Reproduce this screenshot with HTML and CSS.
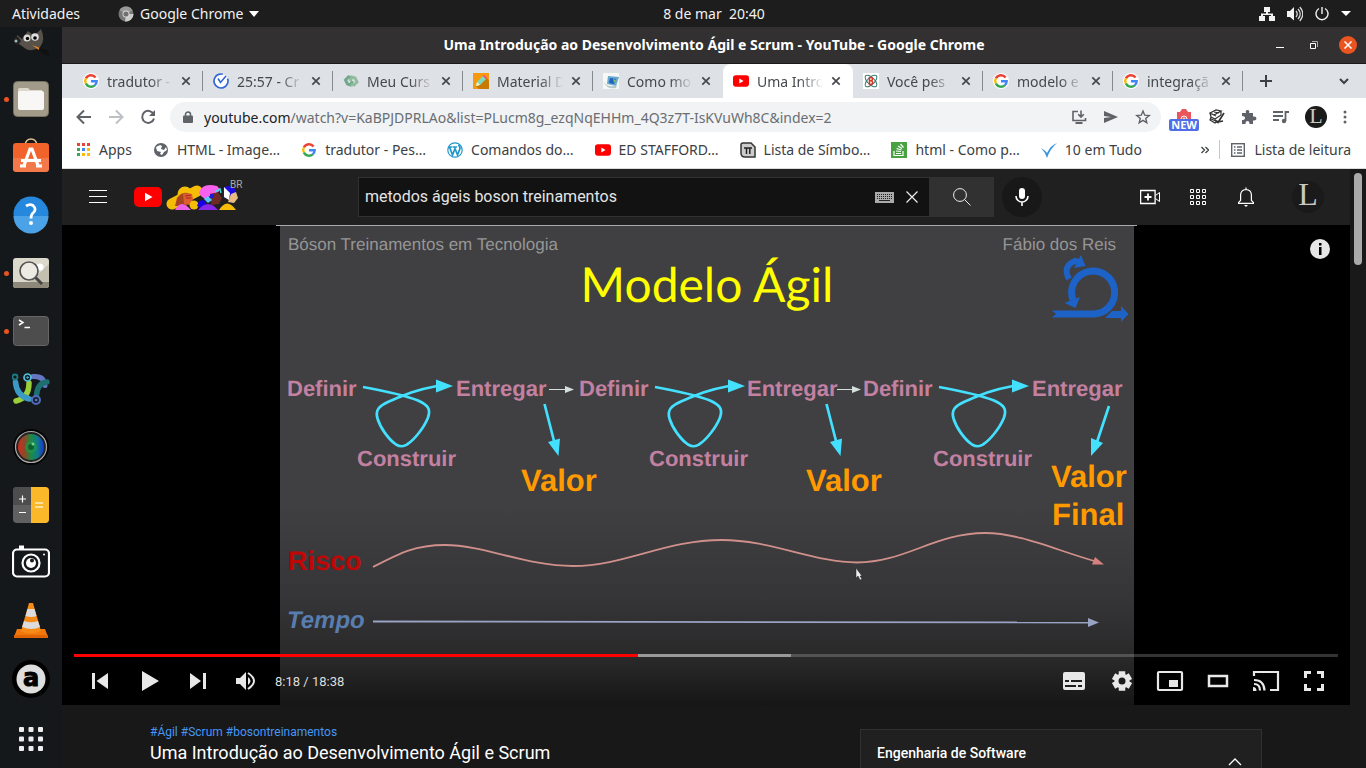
FILE: index.html
```html
<!DOCTYPE html>
<html lang="pt-BR">
<head>
<meta charset="utf-8">
<title>Uma Introdução ao Desenvolvimento Ágil e Scrum - YouTube</title>
<link rel="stylesheet" href="styles.css">
</head>
<body>
<svg class="defs" aria-hidden="true">
  <symbol id="google" viewBox="0 0 16 16">
    <g fill="none" stroke-width="2.4">
      <path d="M12.6 4.4A5.8 5.8 0 0 0 2.9 5.400" stroke="#ea4335"/>
      <path d="M2.900 5.300A5.800 5.800 0 0 0 2.900 10.700" stroke="#fbbc05"/>
      <path d="M2.900 10.600A5.800 5.800 0 0 0 11.800 12.300" stroke="#34a853"/>
      <path d="M8 8.200H13.700A5.800 5.800 0 0 1 11.700 12.400" stroke="#4285f4"/>
    </g>
  </symbol>
  <symbol id="close" viewBox="0 0 10 10"><path d="M1.300 1.300l7.400 7.400M8.700 1.300l-7.400 7.400" stroke="currentColor" stroke-width="1.700"/></symbol>
  <symbol id="youtube" viewBox="0 0 28 20"><rect width="28" height="20" rx="5" fill="#f00"/><path d="M11 5.700v8.600L18.500 10z" fill="#fff"/></symbol>
  <symbol id="loop" viewBox="0 0 94 72">
    <path d="M2 9C24 13 43 17 57 22.500C67 27 70 31 67 39.500C63 50 53 62 46 66.500Q41 70 35 66.500C27 61 19 49 16.500 40.500C14 32 18 28 28 23.500C42 17.500 54 12 76 8" fill="none" stroke="#43e0ff" stroke-width="2.700"/>
    <path d="M75 1.500L92 8L75 14.500z" fill="#43e0ff"/>
  </symbol>
</svg>

<header class="topbar">
  <nav class="topbar-left">
    <button class="plain">Atividades</button>
    <button class="plain app-menu">
      <svg width="16" height="16" viewBox="0 0 16 16"><circle cx="8" cy="8" r="7.500" fill="#777"/><path d="M8 8h7.500A7.500 7.500 0 0 1 7 15.400z" fill="#ccc"/><path d="M8 8L1.500 4.200A7.500 7.500 0 0 1 14.700 4.600z" fill="#999"/><circle cx="8" cy="8" r="3.500" fill="#ddd"/><circle cx="8" cy="8" r="2.600" fill="#707070"/></svg>
      Google Chrome
      <svg width="10" height="6" viewBox="0 0 10 6"><path d="M0 0h10L5 6z" fill="#fff"/></svg>
    </button>
  </nav>
  <time class="clock">8 de mar&nbsp; 20:40</time>
  <div class="tray">
    <svg width="16" height="14" viewBox="0 0 16 14"><path d="M5 0h6v5H9v1.500h5V9h2v5h-6V9h2V8H4v1h2v5H0V9h2V6.500h5V5H5z" fill="#f2f2f2"/></svg>
    <svg width="16" height="16" viewBox="0 0 16 16"><path d="M0 5h3l4-4v13.500L3 11H0z" fill="#f2f2f2"/><path d="M9 5q2.500 3 0 6M11 3q4.500 5 0 10M12.800 1q6 7 0 14" fill="none" stroke="#ddd" stroke-width="1.200"/></svg>
    <svg width="14" height="14" viewBox="0 0 14 14"><path d="M4 1.500A6 6 0 1 0 10 1.500M7 0v7" fill="none" stroke="#f2f2f2" stroke-width="1.400"/></svg>
    <svg width="10" height="5" viewBox="0 0 10 5"><path d="M0 0h10L5 5z" fill="#fff"/></svg>
  </div>
</header>

<div class="desktop">
<nav class="dock" aria-label="Dock">
  <button class="dock-item" aria-label="GIMP"><svg width="38" height="38" viewBox="0 0 38 38"><path d="M5 13l5 4 6-8 6 5 7-7q5 11-1 18-10 7-18-1l-5-3z" fill="#57514a"/><path d="M2 18q0-4 4-3l3 4-3 4q-4 0-4-5z" fill="#222"/><circle cx="4" cy="19" r="1.500" fill="#9bb"/><circle cx="15" cy="16" r="3.500" fill="#ddd"/><circle cx="23" cy="15" r="3.800" fill="#ddd"/><circle cx="15.500" cy="16.500" r="1.700"/><circle cx="23" cy="16" r="1.800"/><path d="M20 23l8 3-1 2z" fill="#f08a20"/><path d="M27 26l9 2 1 6q-7-1-10-6z" fill="#111"/></svg></button>
  <button class="dock-item running" aria-label="Arquivos"><svg width="38" height="38" viewBox="0 0 38 38"><rect x="1.500" y="1.500" width="35" height="35" rx="4" fill="#a29b8a" stroke="#777164"/><path d="M6 10q0-2 2-2h8l2 2h12v6H6z" fill="#dcd7ca"/><rect x="6" y="11" width="26" height="19" rx="2" fill="#f8f7f5"/></svg></button>
  <button class="dock-item" aria-label="Ubuntu Software"><svg width="38" height="38" viewBox="0 0 38 38"><path d="M13 7Q14 1 19 1t6 6" fill="none" stroke="#e5c795" stroke-width="1.500"/><rect x="1" y="5" width="36" height="29" rx="3" fill="#f2622b"/><path d="M1 20h36v11q0 3-3 3H4q-3 0-3-3z" fill="#fff" opacity=".150"/><path d="M12 27.500L18 11h2l6 16.500M9 22.500h20M8 28h6M24 28h6" fill="none" stroke="#fff" stroke-width="3.200"/></svg></button>
  <button class="dock-item" aria-label="Ajuda"><svg width="38" height="38" viewBox="0 0 38 38"><circle cx="19" cy="18" r="17.500" fill="#2688dc"/><path d="M1.500 20h35a17.500 17.500 0 0 1-35 0z" fill="#4ca2e6"/><path d="M14 10q4-2.500 7-.5 4.500 4-.5 8Q19 19 19 22.500" fill="none" stroke="#fff" stroke-width="2.800"/><circle cx="19" cy="27" r="2" fill="#fff"/></svg></button>
  <button class="dock-item running" aria-label="Visualizador de imagens"><svg width="38" height="38" viewBox="0 0 38 38"><rect x="1" y="4" width="36" height="30" rx="3" fill="#dcd9cc"/><path d="M1 28h36v3q0 3-3 3H4q-3 0-3-3z" fill="#8e887a"/><path d="M18 28L37 10v18z" fill="#c4c0b0"/><circle cx="28" cy="13" r="3.500" fill="#fff"/><path d="M23.500 23.500L30 30" stroke="#444" stroke-width="3"/><circle cx="17" cy="17" r="9" fill="#eceae2" stroke="#555" stroke-width="1.700"/></svg></button>
  <button class="dock-item running" aria-label="Terminal"><svg width="38" height="38" viewBox="0 0 38 38"><rect x="1.500" y="4.500" width="35" height="29" rx="3" fill="#4d4d4d" stroke="#666"/><path d="M7 8l4 2.500-4 2.500M12.500 15.500H18" fill="none" stroke="#fff" stroke-width="1.500"/></svg></button>
  <button class="dock-item" aria-label="Editor"><svg width="38" height="38" viewBox="0 0 38 38" fill="none" stroke-linecap="round"><path d="M4 31q13-3 13-18" stroke="#9ace3a" stroke-width="5.500"/><path d="M21 6.500q11-1 12 9" stroke="#6577c2" stroke-width="5"/><path d="M3.500 12q1 14 14 17" stroke="#3b99c5" stroke-width="5.500"/><path d="M24.500 25q1-12 10.500-13" stroke="#1d6f70" stroke-width="5.500"/><circle cx="3" cy="7" r="2.500" stroke="#1d7a80" stroke-width="1.800"/><circle cx="15.500" cy="7.500" r="3.500" fill="#123" stroke="#57c1d8" stroke-width="1.700"/><circle cx="15.500" cy="7.500" r=".8" stroke="#57c1d8"/><circle cx="24" cy="30" r="4" fill="#123" stroke="#5469b8" stroke-width="2"/><circle cx="24" cy="30" r=".8" stroke="#7788d8"/></svg></button>
  <button class="dock-item" aria-label="Câmera"><svg width="38" height="38" viewBox="0 0 38 38"><defs><linearGradient id="lens"><stop stop-color="#d22a1c"/><stop offset=".25" stop-color="#8a4a28"/><stop offset=".5" stop-color="#1b8a45"/><stop offset=".75" stop-color="#127a8a"/><stop offset="1" stop-color="#1435d8"/></linearGradient></defs><circle cx="19" cy="19" r="18" fill="#050505"/><circle cx="19" cy="19" r="15.500" fill="#222" stroke="#aaa" stroke-width="1.200"/><circle cx="19" cy="19" r="13" fill="url(#lens)"/><circle cx="19" cy="19" r="6" fill="#1b9c4c" opacity=".6"/><circle cx="19" cy="19" r="3" fill="#10602f"/><circle cx="21" cy="16" r="1.500" fill="#6fd18a"/></svg></button>
  <button class="dock-item" aria-label="Calculadora"><svg width="38" height="38" viewBox="0 0 38 38"><rect x="1" y="1" width="36" height="36" rx="4" fill="#606060"/><path d="M1 19h18V1H5Q1 1 1 5z" fill="#4d4d4d"/><path d="M19 1h14q4 0 4 4v28q0 4-4 4H19z" fill="#fbb829"/><path d="M7 13h7M10.500 9.500v7M7 26.500h7" stroke="#fff" stroke-width="1.200"/><path d="M23 17h8M23 21h8" stroke="#ffdf9b" stroke-width="1.800"/></svg></button>
  <button class="dock-item" aria-label="Captura de tela"><svg width="38" height="38" viewBox="0 0 38 38" fill="none" stroke="#fff"><path d="M7 3.500h5" stroke-width="4"/><rect x="1" y="5.500" width="36" height="27" rx="4" stroke-width="2.200"/><circle cx="19" cy="19" r="8.500" stroke-width="2.200"/><circle cx="19" cy="19" r="5" fill="#fff" stroke="none"/><circle cx="20" cy="16.500" r="2" fill="#181b1d" stroke="none"/><circle cx="32" cy="10.500" r="1" fill="#fff" stroke="none"/></svg></button>
  <button class="dock-item" aria-label="VLC"><svg width="38" height="38" viewBox="0 0 38 38"><path d="M5 27h28l3 8H2z" fill="#f1780d"/><path d="M17 1h4l8 28q-10 5-20 0z" fill="#f78b17"/><path d="M15.500 7h7l2 7q-5 2-11 0zM12 19q7 2.500 14 0l2 6q-8 4-18 0z" fill="#dcdcdc"/><path d="M2 33h34v3H2z" fill="#e06305"/></svg></button>
  <button class="dock-item" aria-label="Amazon"><svg width="38" height="38" viewBox="0 0 38 38"><circle cx="19" cy="19" r="19" fill="#000"/><circle cx="19" cy="19" r="14.500" fill="#dedede"/><text class="letter" x="19" y="26" text-anchor="middle">a</text></svg></button>
  <button class="dock-item apps" aria-label="Mostrar aplicativos"><svg width="26" height="26" viewBox="0 0 26 26" fill="#eee"><g id="dots"><rect x="1" y="1" width="5" height="5" rx="1"/><rect x="10.500" y="1" width="5" height="5" rx="1"/><rect x="20" y="1" width="5" height="5" rx="1"/></g><use href="#dots" y="9.500"/><use href="#dots" y="19"/></svg></button>
</nav>

<main class="window">
  <div class="titlebar">
    <h1 class="window-title">Uma Introdução ao Desenvolvimento Ágil e Scrum - YouTube - Google Chrome</h1>
    <div class="window-buttons">
      <button class="plain" aria-label="Minimizar"><svg width="8" height="10" viewBox="0 0 8 10"><path d="M0 7.500h8" stroke="#fff"/></svg></button>
      <button class="plain" aria-label="Restaurar"><svg width="8" height="8" viewBox="0 0 8 8" fill="none" stroke="#fff"><path d="M.5 2.500h5v5h-5z"/><path d="M2 .5h5.500V6" stroke="#aaa"/></svg></button>
      <button class="plain window-close" aria-label="Fechar"><svg width="8" height="8" viewBox="0 0 8 8"><path d="M.5.5l7 7M7.500.5l-7 7" stroke="#fff" stroke-width="1.500"/></svg></button>
    </div>
  </div>

  <div class="tabstrip">
    <div class="tab"><svg class="fav round"><use href="#google"/></svg><span>tradutor -</span><button class="plain" aria-label="Fechar guia"><svg class="x"><use href="#close"/></svg></button></div>
    <div class="tab"><svg class="fav" viewBox="0 0 16 16"><circle cx="8" cy="8" r="7" fill="#fff" stroke="#3367d6" stroke-width="1.700" stroke-dasharray="37 7" transform="rotate(-20 8 8)"/><path d="M5 5.500l2.500 4L13 3" fill="none" stroke="#3367d6" stroke-width="1.600"/></svg><span>25:57 - Cr</span><button class="plain" aria-label="Fechar guia"><svg class="x"><use href="#close"/></svg></button></div>
    <div class="tab"><svg class="fav" viewBox="0 0 16 16" fill="none" stroke-width="3"><path d="M8 4.500L5.500 4 2.500 7l2 4 3 1 2-4" stroke="#73a98a"/><path d="M8 11.500l3 .5 3-3-2-4-3-1-2 4" stroke="#91bc9e"/></svg><span>Meu Curs</span><button class="plain" aria-label="Fechar guia"><svg class="x"><use href="#close"/></svg></button></div>
    <div class="tab"><svg class="fav" viewBox="0 0 16 16"><path d="M0 0h16v16H0z" fill="#f59a0c"/><path d="M3 13L14 5l2 3v8H6z" fill="#c87900"/><path d="M3 13l1-4 6-6 3 3-6 6z" fill="#7ed8c1"/><path d="M10 3l1-1 3 3-1 1z" fill="#f39"/><path d="M3 13l1-4 3 3z" fill="#fff2bb"/></svg><span>Material D</span><button class="plain" aria-label="Fechar guia"><svg class="x"><use href="#close"/></svg></button></div>
    <div class="tab before-active"><svg class="fav" viewBox="0 0 16 16"><path d="M0 0h16v16H0z" fill="#f5f8f5"/><path d="M5 3l11 1-3 9-9-2z" fill="#67a9cf"/><path d="M7 5l6 1-2 5-5-1z" fill="#215fc6"/><path d="M10 6l3 1-2 3z" fill="#7cc957"/><path d="M0 8q5 8 14 4l-1 3Q4 17 0 8z" fill="#b8c7c9"/></svg><span>Como mo</span><button class="plain" aria-label="Fechar guia"><svg class="x"><use href="#close"/></svg></button></div>
    <div class="tab active"><svg class="fav"><use href="#youtube"/></svg><span>Uma Intro</span><button class="plain" aria-label="Fechar guia"><svg class="x"><use href="#close"/></svg></button></div>
    <div class="tab"><svg class="fav" viewBox="0 0 16 16"><path d="M0 0h16v16H0z" fill="#fff"/><g fill="none" stroke="#357d70"><ellipse cx="8" cy="8" rx="7.500" ry="3.500" transform="rotate(45 8 8)"/><ellipse cx="8" cy="8" rx="7.500" ry="3.500" transform="rotate(-45 8 8)"/></g><path d="M6.500 4.500h2q2 1.500 0 3.200 2.500 2-.2 3.800H6.500zM6.500 7.800h2" stroke="#d32" stroke-width="1.500" fill="none"/></svg><span>Você pes</span><button class="plain" aria-label="Fechar guia"><svg class="x"><use href="#close"/></svg></button></div>
    <div class="tab"><svg class="fav round"><use href="#google"/></svg><span>modelo e</span><button class="plain" aria-label="Fechar guia"><svg class="x"><use href="#close"/></svg></button></div>
    <div class="tab"><svg class="fav round"><use href="#google"/></svg><span>integraçã</span><button class="plain" aria-label="Fechar guia"><svg class="x"><use href="#close"/></svg></button></div>
    <button class="plain new-tab" aria-label="Nova guia"><svg width="12" height="12" viewBox="0 0 12 12"><path d="M6 0v12M0 6h12" stroke="#3c4043" stroke-width="2"/></svg></button>
    <button class="plain tab-search" aria-label="Pesquisar guias"><svg width="10" height="7" viewBox="0 0 10 7"><path d="M1 1l4 4 4-4" fill="none" stroke="#3c4043" stroke-width="2"/></svg></button>
  </div>

  <div class="toolbar">
    <button class="plain" aria-label="Voltar"><svg width="16" height="16" viewBox="0 0 16 16"><path d="M15 8H2M8 1.500L1.500 8 8 14.500" fill="none" stroke="#5f6368" stroke-width="2"/></svg></button>
    <button class="plain" aria-label="Avançar"><svg width="16" height="16" viewBox="0 0 16 16"><path d="M1 8h13M8 1.500L14.500 8 8 14.500" fill="none" stroke="#bdc1c6" stroke-width="2"/></svg></button>
    <button class="plain" aria-label="Recarregar"><svg width="16" height="16" viewBox="0 0 16 16"><path d="M13.500 5A6 6 0 1 0 14 9.500" fill="none" stroke="#5f6368" stroke-width="2"/><path d="M15 1v6H9z" fill="#5f6368"/></svg></button>
    <div class="omnibox">
      <svg width="10" height="12" viewBox="0 0 10 12"><path d="M2.500 5V3.500a2.500 2.500 0 0 1 5 0V5" fill="none" stroke="#5f6368" stroke-width="1.500"/><rect y="4.500" width="10" height="7.500" rx="1" fill="#5f6368"/></svg>
      <a class="url" href="#"><b>youtube.com</b>/watch?v=KaBPJDPRLAo&amp;list=PLucm8g_ezqNqEHHm_4Q3z7T-IsKVuWh8C&amp;index=2</a>
      <button class="plain" aria-label="Instalar"><svg width="16" height="16" viewBox="0 0 16 16" fill="none" stroke="#5f6368" stroke-width="1.600"><path d="M7 2.500H2v9h12.500V9M10 1.500v6M7.200 5.200L10 8l2.800-2.800"/><path d="M4.500 14h7" stroke-width="2"/></svg></button>
      <button class="plain" aria-label="Compartilhar"><svg width="16" height="14" viewBox="0 0 16 14"><path d="M1 1l14 6L1 13V8l7-1-7-1z" fill="#5f6368"/></svg></button>
      <button class="plain" aria-label="Favoritar"><svg width="16" height="16" viewBox="0 0 16 16"><path d="M8 2l1.700 4.200 4.500.3-3.500 2.900 1.100 4.400L8 11.400l-3.800 2.400 1.100-4.400-3.500-2.900 4.500-.3z" fill="none" stroke="#5f6368" stroke-width="1.400"/></svg></button>
    </div>
    <div class="extensions">
      <button class="plain new-ext" aria-label="Extensão nova"><svg width="16" height="10" viewBox="0 0 16 10"><path d="M1 3h3l2-3h4l2 3h3v7H1z" fill="#e9575c"/><path d="M5 10a3 3 0 0 1 6 0M7 10a1 1 0 0 1 2 0" fill="none" stroke="#fff"/></svg><span>NEW</span></button>
      <button class="plain" aria-label="Anotações"><svg width="16" height="16" viewBox="0 0 16 16" fill="none" stroke="#333" stroke-width="1.200"><path d="M1 4l6-3 5 1-7 4zM1 4l1 4 4 2 6-4V2M2 8l-1 3 5 3 3-2M3 5l4 2M5 3l5 1M2 10l5 2" /><path d="M6 11l3 2.500L15 4M9 13l5-1" stroke-width="1.700"/></svg></button>
      <button class="plain" aria-label="Extensões"><svg width="16" height="16" viewBox="0 0 16 16"><path d="M1 4h4q-1-3 1.500-3T8 4h4v3.500q3.500-.5 3.500 2t-3.500 2V15H8.500q0-3-2-3t-2 3H1v-4q3 0 3-2t-3-2z" fill="#5f6368"/></svg></button>
      <button class="plain" aria-label="Mídia"><svg width="16" height="14" viewBox="0 0 16 14"><path d="M0 2h10M0 6h10M0 10h6M12.500 11V2H16" fill="none" stroke="#5f6368" stroke-width="1.800"/><circle cx="11" cy="11" r="2.200" fill="#5f6368"/></svg></button>
      <button class="plain profile small" aria-label="Perfil">L</button>
      <button class="plain" aria-label="Menu"><svg width="4" height="14" viewBox="0 0 4 14" fill="#5f6368"><circle cx="2" cy="2" r="1.500"/><circle cx="2" cy="7" r="1.500"/><circle cx="2" cy="12" r="1.500"/></svg></button>
    </div>
  </div>

  <nav class="bookmarks">
    <a class="apps-link" href="#"><svg width="14" height="14" viewBox="0 0 14 14"><path d="M0 0h3v3H0zM5 0h3v3H5zM10 0h3v3h-3z" fill="#ea4335"/><path d="M0 5h3v3H0z" fill="#34a853"/><path d="M5 5h3v3H5z" fill="#4285f4"/><path d="M10 5h3v3h-3zM5 10h3v3H5zM10 10h3v3h-3z" fill="#fbbc05"/><path d="M0 10h3v3H0z" fill="#34a853"/></svg>Apps</a>
    <a href="#"><svg class="fav" viewBox="0 0 16 16"><circle cx="8" cy="8" r="7" fill="#5f6368"/><path d="M3 5l4-2 2 1-1 3 3 1 2-3 1 3-3 2-2 3-2-1 1-2-4-1z" fill="#fff"/></svg>HTML - Image…</a>
    <a href="#"><svg class="fav"><use href="#google"/></svg>tradutor - Pes…</a>
    <a href="#"><svg class="fav" viewBox="0 0 16 16"><circle cx="8" cy="8" r="7.200" fill="#fff" stroke="#2196c9" stroke-width="1.200"/><path d="M2.500 5l3 8L8 6.500l2.500 6.500L13 6.500q0-3-2-3M2 5h3.500M6 5h4" fill="none" stroke="#2196c9" stroke-width="1.700"/></svg>Comandos do…</a>
    <a href="#"><svg class="fav"><use href="#youtube"/></svg>ED STAFFORD…</a>
    <a href="#"><svg class="fav" viewBox="0 0 16 16"><path d="M3 1h8l4 4v10H5q-4 0-4-4V3q0-2 2-2z" fill="#ccc" stroke="#333" stroke-width="1.500"/><path d="M4 6h8M6.500 6v6M9.800 6v6" stroke="#222" stroke-width="1.500"/></svg>Lista de Símbo…</a>
    <a href="#"><svg class="fav" viewBox="0 0 16 16"><path d="M0 0h16v16H0z" fill="#48a23f"/><path d="M3 9v4.500h9V9M5 11.500h5M5 9l5 .5M5.500 6.500l5 1.500M7 4l4 2.500M9.500 2l3 3.500" fill="none" stroke="#fff" stroke-width="1.200"/></svg>html - Como p…</a>
    <a href="#"><svg class="fav" viewBox="0 0 16 16"><path d="M0 6q5 3 6 5 4-8 10-10Q9 7 6 16 4 10 0 6z" fill="#3996dc"/></svg>10 em Tudo</a>
    <button class="plain more" aria-label="Mais favoritos"><svg width="8" height="8" viewBox="0 0 8 8"><path d="M.5 1l3 3-3 3M4.500 1l3 3-3 3" fill="none" stroke="#3c4043" stroke-width="1.300"/></svg></button>
    <a class="reading" href="#"><svg width="14" height="14" viewBox="0 0 14 14"><rect x=".7" y=".7" width="12.600" height="12.600" fill="none" stroke="#5f6368" stroke-width="1.400"/><path d="M3 4h1.500M3 7h1.500M3 10h1.500M6 4h5M6 7h5M6 10h5" stroke="#5f6368" stroke-width="1.400"/></svg>Lista de leitura</a>
  </nav>

  <div class="viewport">
  <div class="page">
    <header class="masthead">
      <div class="masthead-start">
        <button class="icon-button" aria-label="Guia"><svg width="18" height="14" viewBox="0 0 18 14"><path d="M0 .5h18M0 6.500h18M0 12.500h18" stroke="#fff"/></svg></button>
        <a class="logo" href="#" aria-label="YouTube">
          <svg width="28" height="20"><use href="#youtube"/></svg>
          <svg width="72" height="26" viewBox="0 0 72 26">
            <path d="M6 20L31 7" stroke="#f6bd06" stroke-width="11" stroke-linecap="round"/>
            <circle cx="19" cy="10" r="7.500" fill="#f6bd06"/><path d="M11 14q6-8 13-4l2 7-6 5H9z" fill="#a84520"/><path d="M17 9l9 1 1 5-2 6-7-1z" fill="#d95f2c"/><path d="M19 12l6-1M20 14l5 0" stroke="#b3202a"/>
            <path d="M9 26q6-12 16 0z" fill="#ee62e6"/><circle cx="28" cy="21" r="4.500" fill="#f6bd06"/>
            <path d="M33 9q3-11 18-7 5 4 0 7L42 13 40 16 35 12z" fill="#f761ed"/><path d="M44 10l8-2 4 6-3 6-8 1z" fill="#6c2b25"/><circle cx="46" cy="12" r="2.200" fill="#1d1be5"/><path d="M38 15l4-3 4 4-4 3z" fill="#55c9ff"/><path d="M33 17l5-1 3 5-5 3-5-2z" fill="#1700e8"/><path d="M32 26q10-12 20 0z" fill="#8928e8"/><path d="M49 8l5-3 1 4" fill="none" stroke="#4dd" stroke-width="1.500"/>
            <path d="M57 4q8-5 13 3l-3 10-10-4z" fill="#1b0be6"/><path d="M58 3l6 6-1 7-5-3z" fill="#fff"/><path d="M65 10l5-2 2 6-4 5-6-1z" fill="#eaba83"/><path d="M53 26q8-13 17 0z" fill="#f6bd06"/>
          </svg>
        </a>
        <span class="country">BR</span>
      </div>
      <form class="search" role="search">
        <div class="search-box">
          <input type="text" aria-label="Pesquisar" value="metodos ágeis boson treinamentos">
          <button type="button" class="plain" aria-label="Teclado virtual"><svg width="19" height="11" viewBox="0 0 19 11"><path d="M0 0h19v11H0z" fill="#aaa"/><path d="M2 2.500h15M2 4.500h15M2 6.500h15" stroke="#222" stroke-dasharray="1 1"/><path d="M4 8.500h11" stroke="#222"/></svg></button>
          <button type="button" class="plain" aria-label="Limpar"><svg width="12" height="12" viewBox="0 0 12 12"><path d="M.5.5l11 11M11.500.5l-11 11" stroke="#eee" stroke-width="1.200"/></svg></button>
        </div>
        <button class="search-button" aria-label="Buscar"><svg width="18" height="18" viewBox="0 0 18 18" fill="none" stroke="#eee"><circle cx="7" cy="7" r="6.400"/><path d="M11.500 11.500l6 6"/></svg></button>
        <button type="button" class="mic" aria-label="Pesquisar por voz"><svg width="14" height="18" viewBox="0 0 14 18"><rect x="4" y="0" width="6" height="11" rx="3" fill="#fff"/><path d="M1 8a6 6 0 0 0 12 0M7 14v4" fill="none" stroke="#fff" stroke-width="1.600"/></svg></button>
      </form>
      <div class="masthead-end">
        <button class="icon-button" aria-label="Criar"><svg width="20" height="16" viewBox="0 0 20 16" fill="none" stroke="#fff"><path d="M.6 1.500h14.500v13H.6z" stroke-width="1.300"/><path d="M15.500 6.500l4-3v9l-4-3"/><path d="M8 4.500v7M4.500 8h7" stroke-width="1.800"/></svg></button>
        <button class="icon-button" aria-label="Aplicativos"><svg width="16" height="16" viewBox="0 0 16 16" fill="none" stroke="#fff"><g id="squares"><path d="M.5.5h3v3h-3zM6.500.5h3v3h-3zM12.500.5h3v3h-3z"/></g><use href="#squares" y="6"/><use href="#squares" y="12"/></svg></button>
        <button class="icon-button" aria-label="Notificações"><svg width="16" height="20" viewBox="0 0 16 20"><path d="M.6 16.400v-1l2-2V8q0-5 5.400-5.500Q13.400 3 13.400 8v5.400l2 2v1zM8 .5v2" fill="none" stroke="#fff" stroke-width="1.200"/><path d="M6 18h4l-2 2z" fill="#fff"/></svg></button>
        <button class="plain profile" aria-label="Conta">L</button>
      </div>
    </header>

    <section class="player" aria-label="Vídeo">
      <svg class="slide" viewBox="274 225 864 480" role="img" aria-label="Modelo Ágil">
        <defs>
          <linearGradient id="fade" x1="0" y1="0" x2="0" y2="1">
            <stop stop-color="#403f41"/><stop offset=".58" stop-color="#403f41"/><stop offset=".78" stop-color="#353436"/><stop offset=".91" stop-color="#292829"/><stop offset="1" stop-color="#161616"/>
          </linearGradient>
        </defs>
        <rect x="280" y="225" width="854" height="480" fill="url(#fade)"/>
        <path d="M276 225.500h861" stroke="#aaa"/>
        <g class="caption">
          <text x="288" y="250">Bóson Treinamentos em Tecnologia</text>
          <text x="1116" y="250" text-anchor="end">Fábio dos Reis</text>
        </g>
        <text class="headline" x="707" y="302" text-anchor="middle">Modelo Ágil</text>
        <g fill="none" stroke="#1d62c6" stroke-width="7">
          <path d="M1052 314H1093A21.500 21.500 0 1 0 1073 300"/>
          <path d="M1069 279Q1062 266 1075 261L1079 262" stroke-width="6"/>
        </g>
        <path d="M1064.500 303L1080 297 1075.500 308zM1081 255L1085.500 266 1074 268zM1105 318L1112 311H1121V306L1128.500 314 1121 322V318z" fill="#1d62c6"/>
        <path d="M1050 309l6 5-6 5z" fill="#403f41"/>
        <g class="step">
          <text x="287" y="396">Definir</text><text x="456" y="396">Entregar</text>
          <text x="579" y="396">Definir</text><text x="747" y="396">Entregar</text>
          <text x="863" y="396">Definir</text><text x="1032" y="396">Entregar</text>
          <text x="357" y="466">Construir</text><text x="649" y="466">Construir</text><text x="933" y="466">Construir</text>
        </g>
        <use href="#loop" x="361" y="378" width="94" height="72"/>
        <use href="#loop" x="653" y="378" width="94" height="72"/>
        <use href="#loop" x="937" y="378" width="94" height="72"/>
        <path d="M549 389.500h18M837 389.500h16" stroke="#d5e0db" stroke-width="1.200"/>
        <path d="M565 386l9 3.500-9 3.500zM852 386l9 3.500-9 3.500z" fill="#d5e0db"/>
        <path d="M544.500 404l9.500 37M826.500 404l9.500 37M1109 406l-12 36" stroke="#43e0ff" stroke-width="2.700"/>
        <path d="M548 442l12-3.500L558.500 456zM830 442l12-3.500L840.500 456zM1091 438l12 5L1091 456z" fill="#43e0ff"/>
        <g class="value">
          <text x="521" y="491">Valor</text><text x="806" y="491">Valor</text>
          <text x="1051" y="487">Valor</text><text x="1052" y="525">Final</text>
        </g>
        <text class="risk" x="288" y="570">Risco</text>
        <text class="time-axis" x="287" y="628">Tempo</text>
        <path d="M373 567C400 553 415 545 445 545C485 545 525 566 573 566C625 566 665 540 722 540C770 540 815 562.500 857 562.500C905 562.500 935 533 985 533C1020 533 1055 550 1096 561.500" fill="none" stroke="#cf908c" stroke-width="1.800"/>
        <path d="M1095 557l9 7.500-12 0z" fill="#d5827e"/>
        <path d="M373 621.500L1090 622.500" stroke="#99a3c4" stroke-width="1.800"/>
        <path d="M1088 618l11 4.500-11 4.500z" fill="#99a3c4"/>
        <path d="M856 568v10l2-2 2 4 2-1-2-3h2z" fill="#eee" stroke="#222" stroke-width=".5"/>
      </svg>
      <button class="info" aria-label="Informações"><svg width="20" height="20" viewBox="0 0 20 20"><circle cx="10" cy="10" r="10" fill="#e6e6e6"/><path d="M9 4h2.500v2.500H9zM9 8h2.500v8H9z" fill="#000"/></svg></button>
      <div class="chrome-bottom">
        <div class="progress" role="progressbar" aria-label="Progresso" aria-valuenow="498" aria-valuemax="1118"><div class="loaded" style="width:56.7%"></div><div class="played" style="width:44.6%"></div></div>
        <div class="controls">
          <button class="control" aria-label="Anterior"><svg viewBox="0 0 48 48"><path d="M14 16h3v16h-3zM30 16v16L18.500 24z"/></svg></button>
          <button class="control" aria-label="Reproduzir"><svg viewBox="0 0 48 48"><path d="M16 14v20l17-10z"/></svg></button>
          <button class="control" aria-label="Próximo"><svg viewBox="0 0 48 48"><path d="M16 16v16l11-8zM29 16h3v16h-3z"/></svg></button>
          <button class="control" aria-label="Volume"><svg viewBox="0 0 48 48"><path d="M14 21h4l6-6v18l-6-6h-4zM26 20q5 4 0 8z"/><path d="M26 16q12 8 0 16" fill="none" stroke="#e8e8e8" stroke-width="2"/></svg></button>
          <span class="time">8:18 / 18:38</span>
          <button class="control" aria-label="Legendas"><svg viewBox="0 0 48 48"><path fill-rule="evenodd" d="M15 15h18q2 0 2 2v14q0 2-2 2H15q-2 0-2-2V17q0-2 2-2zm0 8v2h4v-2zm6 0v2h11v-2zm-6 5v2h11v-2zm13 0v2h4v-2z"/></svg></button>
          <button class="control" aria-label="Configurações"><svg viewBox="0 0 48 48"><path d="M22 15.500h4v17h-4z" stroke="#e8e8e8" stroke-width="2.500"/><path d="M22 15.500h4v17h-4z" stroke="#e8e8e8" stroke-width="2.500" transform="rotate(60 24 24)"/><path d="M22 15.500h4v17h-4z" stroke="#e8e8e8" stroke-width="2.500" transform="rotate(120 24 24)"/><circle cx="24" cy="24" r="7.500"/><circle cx="24" cy="24" r="3.500" fill="#1d1d1d"/></svg></button>
          <button class="control" aria-label="Miniplayer"><svg viewBox="0 0 48 48"><rect x="12" y="15" width="24" height="18" rx="1" fill="none" stroke="#e8e8e8" stroke-width="2.200"/><path d="M23 23h9v7h-9z"/></svg></button>
          <button class="control" aria-label="Modo teatro"><svg viewBox="0 0 48 48"><path d="M15 19h18v10H15z" fill="none" stroke="#e8e8e8" stroke-width="2.500"/></svg></button>
          <button class="control" aria-label="Transmitir"><svg viewBox="0 0 48 48"><path d="M12 19v-4h24v18h-8M12 27q6 0 6 6.500M12 23q10 0 10.500 10.500" fill="none" stroke="#e8e8e8" stroke-width="2.200"/><path d="M11 30q3.500 0 3.500 4H11z"/></svg></button>
          <button class="control" aria-label="Tela cheia"><svg viewBox="0 0 48 48"><path d="M15.500 21v-5.500H21M27 15.500h5.500V21M32.500 27v5.500H27M21 32.500h-5.500V27" fill="none" stroke="#e8e8e8" stroke-width="3"/></svg></button>
        </div>
      </div>
    </section>

    <div class="details">
      <article class="video-info">
        <p class="tags"><a href="#">#Ágil</a> <a href="#">#Scrum</a> <a href="#">#bosontreinamentos</a></p>
        <h2 class="video-title">Uma Introdução ao Desenvolvimento Ágil e Scrum</h2>
      </article>
      <aside class="playlist">
        <h3>Engenharia de Software</h3>
        <button class="plain" aria-label="Recolher"><svg width="14" height="8" viewBox="0 0 14 8"><path d="M1 7l6-6 6 6" fill="none" stroke="#fff" stroke-width="1.300"/></svg></button>
      </aside>
    </div>
  </div>
  <div class="scrollbar"><div class="thumb"></div></div>
  </div>
</main>
</div>
</body>
</html>
```
FILE: styles.css
```css
* { box-sizing: border-box; }
body {
  margin: 0;
  height: 100vh;
  overflow: hidden;
  display: flex;
  flex-direction: column;
  background: #181818;
  color: #fff;
  font-family: "Noto Sans", sans-serif;
  font-size: 14px;
}
.defs { position: absolute; width: 0; height: 0; }
svg { display: block; flex-shrink: 0; }
a { color: inherit; text-decoration: none; }
button { font: inherit; color: inherit; cursor: pointer; }
.plain {
  display: flex;
  align-items: center;
  justify-content: center;
  padding: 0;
  border: 0;
  background: none;
}

/* desktop bar */
.topbar {
  flex: none;
  height: 27px;
  display: grid;
  grid-template-columns: 1fr auto 1fr;
  align-items: center;
  background: #1d1d1d;
  color: #f2f2f2;
}
.topbar-left { display: flex; gap: 38px; padding-left: 12px; }
.app-menu { gap: 6px; }
.clock { padding-left: 62px; }
.tray { display: flex; align-items: center; justify-content: flex-end; gap: 12px; padding-right: 15px; }

.desktop { flex: 1; min-height: 0; display: flex; }

/* dock */
.dock {
  flex: none;
  width: 62px;
  display: flex;
  flex-direction: column;
  justify-content: flex-end;
  overflow: hidden;
  background: #15181a;
}
.dock-item {
  position: relative;
  flex: none;
  height: 58px;
  display: flex;
  align-items: center;
  justify-content: center;
  padding: 0;
  border: 0;
  background: none;
}
.dock-item.apps { height: 60px; padding-top: 2px; }
.letter { font: 700 24px "DejaVu Sans", sans-serif; fill: #000; stroke: #000; stroke-width: 1px; }
.running::before {
  content: "";
  position: absolute;
  left: 4px;
  top: 27px;
  width: 5px;
  height: 5px;
  border-radius: 50%;
  background: #e95420;
}

/* browser window */
.window { flex: 1; min-width: 0; display: flex; flex-direction: column; }
.titlebar {
  flex: none;
  height: 37px;
  display: grid;
  grid-template-columns: 1fr auto 1fr;
  align-items: center;
  background: #323031;
  border-bottom: 1px solid #1a1a1a;
}
.window-title { grid-column: 2; margin: 0; font-size: 14px; line-height: 20px; font-weight: 700; }
.window-buttons { display: flex; align-items: center; justify-content: flex-end; gap: 26px; padding-right: 9px; }
.window-close { width: 18px; height: 18px; margin-left: -5px; border-radius: 50%; background: #e95420; }

.tabstrip {
  flex: none;
  height: 34px;
  display: flex;
  padding-left: 11px;
  background: #dee1e6;
  color: #45494d;
}
.tab {
  position: relative;
  flex: 0 1 130px;
  min-width: 0;
  display: flex;
  align-items: center;
  gap: 8px;
  padding: 0 12px 0 10px;
}
.tab::after { content: ""; position: absolute; right: 0; top: 7px; width: 1px; height: 20px; background: #858a90; }
.tab.active { background: #fff; border-radius: 8px 8px 0 0; }
.tab.active::after, .tab.before-active::after { display: none; }
.tab span {
  flex: 1;
  min-width: 0;
  white-space: nowrap;
  mask-image: linear-gradient(90deg, #000 65%, transparent);
}
.fav { width: 16px; height: 16px; }
.fav.round { border-radius: 50%; background: #fff; }
.x { width: 10px; height: 10px; }
.new-tab { margin-left: 17px; }
.tab-search { margin: 0 17px 0 auto; }

.toolbar {
  flex: none;
  height: 38px;
  display: flex;
  align-items: center;
  gap: 16px;
  padding: 0 19px 0 14px;
  background: #fff;
}
.omnibox {
  flex: 1;
  height: 30px;
  min-width: 0;
  display: flex;
  align-items: center;
  gap: 16px;
  margin-left: -2px;
  padding: 0 10px 0 13px;
  border-radius: 15px;
  background: #f1f3f4;
}
.url { flex: 1; min-width: 0; overflow: hidden; white-space: nowrap; margin-left: -5px; color: #6a6e73; }
.url b { font-weight: 400; color: #202124; }
.extensions { display: flex; align-items: center; gap: 16px; margin-left: -8px; color: #fff; }
.new-ext { flex-direction: column; padding-top: 6px; margin-right: -6px; }
.new-ext span { padding: 0 2px; border-radius: 2px; background: #4f6ee8; font-size: 11px; line-height: 12px; font-weight: 700; }
.profile {
  width: 32px;
  height: 32px;
  padding-bottom: 6px;
  border-radius: 50%;
  background: #1a1a1a;
  color: #c9c9c4;
  font: 32px/32px "Liberation Serif", serif;
}
.profile.small { width: 22px; height: 22px; padding-bottom: 2px; font-size: 22px; line-height: 22px; }

.bookmarks {
  flex: none;
  height: 33px;
  display: flex;
  align-items: center;
  gap: 21px;
  padding: 0 15px 5px;
  background: #fff;
  border-bottom: 1px solid #dadce0;
  color: #3c4043;
  white-space: nowrap;
}
.bookmarks a { display: flex; align-items: center; gap: 8px; }
.more { margin-left: auto; }
.bookmarks .reading { gap: 9px; padding-left: 11px; border-left: 1px solid #c4c7cc; margin-left: -11px; }

/* page */
.viewport { flex: 1; min-height: 0; display: flex; overflow: hidden; }
.page { flex: 1; min-width: 0; font-family: Roboto, sans-serif; }
.scrollbar { flex: none; width: 16px; padding: 4px; background: #191919; }
.thumb { height: 92px; border-radius: 4px; background: #aaa; }

.masthead {
  height: 56px;
  display: flex;
  align-items: center;
  padding: 0 26px 0 16px;
  background: #202020;
}
.masthead-start { flex: 0 0 280px; display: flex; align-items: center; }
.icon-button {
  width: 40px;
  height: 40px;
  display: flex;
  align-items: center;
  justify-content: center;
  padding: 0;
  border: 0;
  background: none;
}
.logo { display: flex; align-items: center; gap: 4px; margin-left: 16px; }
.country { align-self: flex-start; margin: 2px 0 0 -8px; font-size: 10px; color: #aaa; }
.search { flex: 0 1 684px; min-width: 0; height: 40px; display: flex; }
.search-box {
  flex: 1;
  min-width: 0;
  display: flex;
  align-items: center;
  gap: 12px;
  padding: 0 11px 0 6px;
  border: 1px solid #303030;
  background: #121212;
}
.search-box input {
  flex: 1;
  min-width: 0;
  padding: 0;
  border: 0;
  outline: 0;
  background: none;
  color: #e4e4e4;
  font: 16px/24px Roboto, sans-serif;
}
.search-button { width: 64px; display: flex; align-items: center; justify-content: center; border: 0; background: #313131; }
.mic { width: 40px; margin-left: 8px; display: flex; align-items: center; justify-content: center; padding: 0; border: 0; border-radius: 50%; background: #181818; }
.masthead-end { margin-left: auto; display: flex; align-items: center; gap: 8px; }
.masthead-end .profile { margin-left: 18px; }

.player { position: relative; aspect-ratio: 161 / 60; background: #000; }
.slide { width: 100%; height: 100%; font-family: "Liberation Sans", Arial, sans-serif; text-rendering: geometricPrecision; }
.caption { fill: #969696; font-size: 17px; }
.headline { fill: #ffff00; font: 48px Lato, sans-serif; }
.step { fill: #c381a2; font-size: 22px; font-weight: 700; }
.value { fill: #ff9b00; font-size: 31px; font-weight: 700; }
.risk { fill: #bf0705; font-size: 27px; font-weight: 700; }
.time-axis { fill: #587dae; font-size: 24px; font-weight: 700; font-style: italic; }
.info { position: absolute; top: 14px; right: 20px; padding: 0; border: 0; background: none; }
.chrome-bottom { position: absolute; left: 12px; right: 12px; bottom: 0; }
.progress { position: relative; height: 3px; background: rgba(255, 255, 255, .2); }
.loaded, .played { position: absolute; left: 0; top: 0; height: 100%; }
.loaded { background: #999; }
.played { background: #f00; }
.controls { height: 48px; display: flex; align-items: center; padding-left: 4px; }
.control { width: 48px; height: 48px; padding: 0; border: 0; background: none; fill: #e8e8e8; }
.time { flex: 1; padding-left: 5px; font-size: 13px; color: #ddd; }

.details { display: flex; gap: 24px; margin: 0 88px; padding-top: 24px; }
.video-info { flex: 1; min-width: 0; margin-top: -6px; }
.tags { margin: 0; font-size: 12px; line-height: 18px; }
.tags a { color: #4596f5; }
.video-title { margin: 0; font-size: 18px; line-height: 24px; font-weight: 400; }
.playlist {
  flex: 0 0 402px;
  height: 96px;
  display: flex;
  align-items: flex-start;
  justify-content: space-between;
  padding: 11px 19px 12px 16px;
  border: 1px solid #303030;
  background: #202020;
}
.playlist h3 { margin: 0; font-size: 14px; line-height: 24px; font-weight: 500; }
.playlist .plain { padding-top: 17px; }
```
